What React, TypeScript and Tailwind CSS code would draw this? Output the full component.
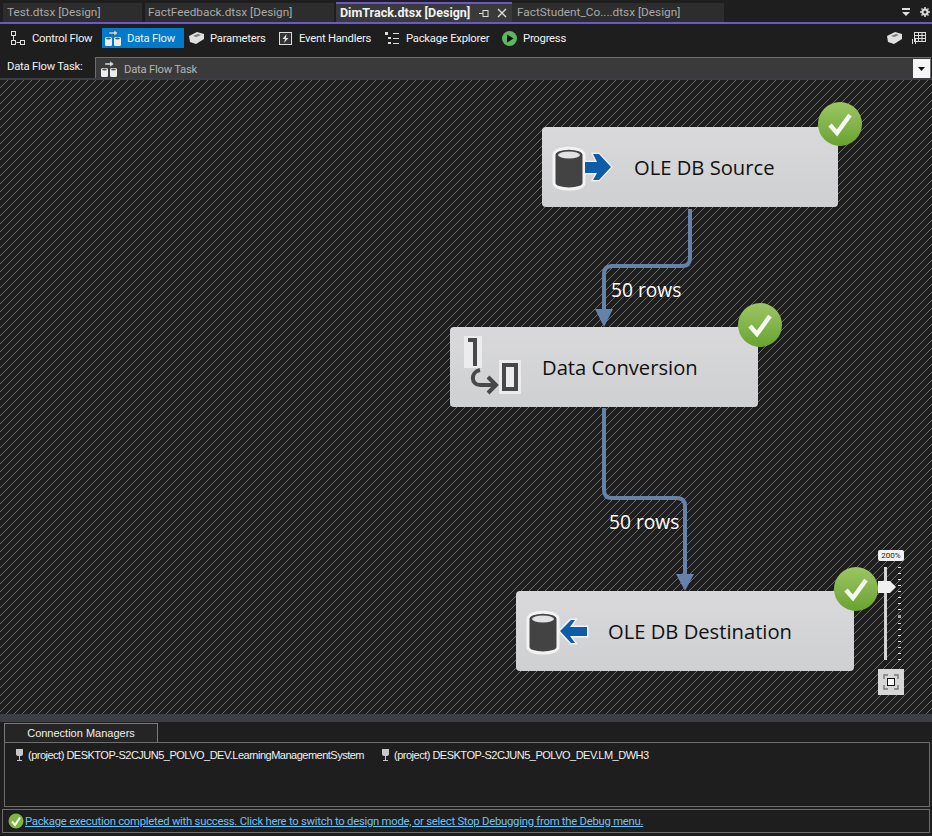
import React from 'react';

const ui = "font-['Roboto','Noto_Sans',sans-serif]";
const small = 'text-[11.3px] tracking-[-0.25px]';

const Check = ({ className }: { className: string }) => (
  <div className={`absolute flex h-[44px] w-[44px] items-center justify-center rounded-full bg-gradient-to-b from-[#9cc664] to-[#69a32f] ${className}`}>
    <svg width="30" height="30" viewBox="0 0 30 30" fill="none">
      <path d="M5 16 L12 24 L25 6" stroke="#fff" strokeWidth="4.5" strokeOpacity="0.92" />
    </svg>
  </div>
);

const Cylinder = () => (
  <g>
    <path d="M4 13 C4 4 34 4 34 13 L34 41 C34 49 4 49 4 41 Z" fill="#434343" stroke="#f3f3f4" strokeWidth="3" />
    <ellipse cx="19" cy="13" rx="11" ry="3.5" fill="#e2e2e4" />
  </g>
);

const SourceIcon = () => (
  <svg width="64" height="52" viewBox="0 0 64 52" className="blur-[0.3px]">
    <Cylinder />
    <path d="M35 20 H47 L43 12 H49 L61 25 L49 38 H43 L47 31 H35 Z" fill="#0e5ba8" stroke="#f3f3f4" strokeWidth="2.5" paintOrder="stroke" />
  </svg>
);

const DestIcon = () => (
  <svg width="68" height="52" viewBox="0 0 68 52" className="blur-[0.3px]">
    <Cylinder />
    <path d="M36 25 L47 14 H51 L46 21 H63 V30 H46 L51 37 H47 Z" fill="#0e5ba8" stroke="#f3f3f4" strokeWidth="3" paintOrder="stroke" />
  </svg>
);

const ConvertIcon = () => (
  <svg width="58" height="62" viewBox="0 0 58 62" fill="none" className="blur-[0.3px]">
    <rect x="1" y="1" width="18" height="32" fill="#ececee" />
    <path d="M5 5 H12 V31" stroke="#484848" strokeWidth="4" />
    <rect x="36" y="25" width="22" height="34" fill="#ececee" />
    <rect x="41" y="30" width="12" height="24" stroke="#484848" strokeWidth="4" />
    <path d="M17 35 C7 37 8 50 17 50 H32 M25 42 L33 50 L25 58" stroke="#484848" strokeWidth="4" />
  </svg>
);

const Node = ({ className, iconClass, icon, label }: { className: string; iconClass: string; icon: React.ReactNode; label: string }) => (
  <div className={`absolute h-[80px] rounded-[4px] bg-gradient-to-b from-[#d9d9dc] to-[#cfd0d2] ${className}`}>
    <div className={`absolute ${iconClass}`}>{icon}</div>
    <span className="absolute left-[92px] top-[24px] whitespace-nowrap font-['Open_Sans',sans-serif] text-[20.2px] leading-[32px] text-[#111]">{label}</span>
  </div>
);

const ToolItem = ({ icon, label, className }: { icon: React.ReactNode; label: string; className: string }) => (
  <div className={`flex h-[20px] items-center ${className}`}>
    {icon}
    <span className={`whitespace-nowrap pt-[2px] text-[#f1f1f1] ${small}`}>{label}</span>
  </div>
);

const Drums = () => (
  <svg width="16" height="16" viewBox="0 0 16 16" fill="#ececec" className="mr-[6px] shrink-0">
    <rect x="0" y="7" width="7" height="9" rx="1.5" />
    <rect x="9" y="7" width="7" height="9" rx="1.5" />
    <ellipse cx="3.5" cy="8.5" rx="2.4" ry="0.9" fill="#555" />
    <ellipse cx="12.5" cy="8.5" rx="2.4" ry="0.9" fill="#555" />
    <path d="M4 2 H9 V0 L13 3 L9 6 V4 H4 Z" fill="#d8d8d8" stroke="#444" strokeWidth="0.5" />
  </svg>
);

const ParamBox = ({ className }: { className: string }) => (
  <svg width="15" height="12" viewBox="0 0 15 12" fill="#e0e0e0" className={className}>
    <path d="M0 4 L8 0 L15 2 L15 7 L7 12 L1 10 Z" />
    <path d="M4 4 L9 2 L12 3 L7 5 Z" fill="#777" />
  </svg>
);

const Tab = ({ label, className }: { label: string; className: string }) => (
  <div className={`flex h-[19px] items-center whitespace-nowrap bg-[#2d2d2d] text-[11.8px] text-[#a9a9a9] ${className}`}>{label}</div>
);

// diagonal stripes of the design surface, one 8x8 tile drawn pixel by pixel
const Hatch = () => (
  <svg className="absolute left-0 top-0" width="932" height="636" shapeRendering="crispEdges">
    <defs>
      <pattern id="hatch" width="8" height="8" patternUnits="userSpaceOnUse">
        <rect width="8" height="8" fill="#1e1e1e" />
        {[0, 1, 2, 3, 4, 5, 6, 7].map((i) => (
          <rect key={i} x={7 - i} y={i} width="1" height="1" fill="#6e6e6e" />
        ))}
      </pattern>
    </defs>
    <rect width="932" height="636" fill="url(#hatch)" />
  </svg>
);

const Connectors = () => (
  <svg className="absolute left-0 top-0" width="932" height="636" viewBox="0 80 932 636" fill="none">
    <path d="M690 209 V258 Q690 266 682 266 H612 Q604 266 604 274 V312" stroke="#6582ab" strokeWidth="4" />
    <path d="M595 309 H613 L604 327 Z" fill="#6582ab" />
    <path d="M604 408 V490 Q604 498 612 498 H677 Q685 498 685 506 V576" stroke="#6582ab" strokeWidth="4" />
    <path d="M676 574 H694 L685 591 Z" fill="#6582ab" />
  </svg>
);

const Ticks = () => (
  <div className="absolute left-[20px] top-[17px] flex h-[93px] w-[3px] flex-col justify-between">
    {Array.from({ length: 16 }).map((_, i) => (
      <div key={i} className={i === 8 ? 'h-[3px] w-[3px] bg-[#aaa]' : 'h-[1px] w-[3px] bg-[#e4e4e4]'} />
    ))}
  </div>
);

const Plug = () => (
  <svg width="9" height="14" viewBox="0 0 9 14" fill="none" className="shrink-0">
    <path d="M1 1 H8 V6 Q8 8 5 8 V12 H7 V13 H2 V12 H4 V8 Q1 8 1 6 Z" fill="#c8c8c8" />
  </svg>
);

export default function App() {
  return (
    <div className={`flex h-[836px] w-[932px] flex-col overflow-hidden bg-[#1e1e1e] ${ui}`}>
      {/* document tabs */}
      <div className="flex h-[24px] shrink-0 items-start border-b-2 border-[#6b58cf] pt-[3px]">
        <Tab label="Test.dtsx [Design]" className="ml-[3px] w-[139px] pl-[4px]" />
        <Tab label="FactFeedback.dtsx [Design]" className="ml-[3px] w-[189px] pl-[3px]" />
        <div className="-mt-[1px] ml-[2px] flex h-[20px] w-[176px] items-center border-t-2 border-[#6b58cf] bg-[#3a3a3a] pl-[4px] text-[12.5px] font-bold text-[#f1f1f1]">
          <span className="whitespace-nowrap">DimTrack.dtsx [Design]</span>
          <svg className="ml-[9px] shrink-0" width="10" height="10" viewBox="0 0 10 10" fill="none" stroke="#ddd">
            <path d="M0 5.5 H4 M4 2.5 H9 M4 8.5 H9 M4 2 V9 M9 2 V9" />
          </svg>
          <svg className="ml-[8px] shrink-0" width="10" height="10" viewBox="0 0 10 10" fill="none" stroke="#ddd" strokeWidth="1.4">
            <path d="M1 1 L9 9 M9 1 L1 9" />
          </svg>
        </div>
        <Tab label="FactStudent_Co....dtsx [Design]" className="w-[212px] pl-[5px]" />
        <div className="ml-auto mr-[1px] flex h-[18px] items-center gap-[9px] pr-[1px]">
          <svg width="10" height="9" viewBox="0 0 10 9" fill="#e0e0e0"><rect x="1" y="0" width="8" height="2" /><path d="M1 4 H9 L5 8 Z" /></svg>
          <svg width="10" height="10" viewBox="0 0 10 10" fill="none" stroke="#ddd" strokeWidth="2">
            <circle cx="5" cy="5" r="2.5" />
            <path d="M5 0 V2 M5 8 V10 M0 5 H2 M8 5 H10 M1.5 1.5 L2.5 2.5 M7.5 7.5 L8.5 8.5 M8.5 1.5 L7.5 2.5 M2.5 7.5 L1.5 8.5" strokeWidth="1.5" />
          </svg>
        </div>
      </div>

      {/* designer toolbar */}
      <div className="flex h-[28px] shrink-0 items-center pl-[8px]">
        <ToolItem
          className="w-[94px] pl-[3px]"
          label="Control Flow"
          icon={
            <svg width="15" height="15" viewBox="0 0 15 15" fill="none" stroke="#ddd" className="mr-[6px]">
              <rect x="0.5" y="0.5" width="4" height="4" />
              <rect x="0.5" y="9.5" width="4" height="4" />
              <rect x="9.5" y="9.5" width="4" height="4" />
              <path d="M2.5 5 V9 M5.5 11.5 H9" />
            </svg>
          }
        />
        <ToolItem className="w-[82px] bg-[#007acc] pl-[3px]" label="Data Flow" icon={<Drums />} />
        <ToolItem className="w-[92px] pl-[5px]" label="Parameters" icon={<ParamBox className="mr-[6px] shrink-0" />} />
        <ToolItem
          className="w-[106px] pl-[3px]"
          label="Event Handlers"
          icon={
            <svg width="13" height="13" viewBox="0 0 13 13" className="mr-[7px] shrink-0">
              <rect x="0.5" y="0.5" width="12" height="12" fill="#333" stroke="#ddd" />
              <path d="M7.5 2 L3.5 7 H6 L5 11 L9.5 6 H7 Z" fill="#ddd" />
            </svg>
          }
        />
        <ToolItem
          className="w-[117px] pl-[3px]"
          label="Package Explorer"
          icon={
            <svg width="14" height="14" viewBox="0 0 14 14" fill="#ddd" className="mr-[7px] shrink-0">
              <rect x="0" y="1" width="3" height="3" />
              <rect x="3" y="6" width="3" height="2" />
              <rect x="3" y="11" width="3" height="2" />
              <rect x="8" y="2" width="6" height="1" />
              <rect x="8" y="7" width="6" height="1" />
              <rect x="8" y="12" width="6" height="1" />
            </svg>
          }
        />
        <ToolItem
          className="pl-[3px]"
          label="Progress"
          icon={
            <svg width="15" height="15" viewBox="0 0 15 15" className="mr-[6px] shrink-0">
              <circle cx="7.5" cy="7.5" r="7.5" fill="#5cb85c" />
              <path d="M5 3.5 L11.5 7.5 L5 11.5 Z" fill="#111" />
            </svg>
          }
        />
        <div className="ml-auto flex items-center gap-[10px] pr-[6px]">
          <ParamBox className="shrink-0" />
          <svg width="14" height="14" viewBox="0 0 14 14" fill="none" stroke="#ddd">
            <rect x="2.5" y="1.5" width="11" height="9" />
            <path d="M2.5 4.5 H13.5 M6.5 1.5 V10.5 M10 1.5 V10.5 M2.5 7.5 H13.5 M0.5 8 V13 M3.5 8 V13" />
          </svg>
        </div>
      </div>

      {/* task selector */}
      <div className="flex h-[26px] shrink-0 items-start pl-[7px] pr-[1px] pt-[5px]">
        <span className={`w-[88px] pt-[1px] leading-[18px] text-[#f1f1f1] ${small}`}>Data Flow Task:</span>
        <div className="flex h-[21px] flex-1 items-center border border-b-0 border-[#6d6d6d] bg-[#3a3a3a] pl-[5px] pt-[1px]">
          <Drums />
          <span className={`ml-[1px] pt-[3px] text-[#b4b4b4] ${small}`}>Data Flow Task</span>
          <div className="ml-auto flex h-[20px] w-[17px] items-center justify-center bg-[#f5f5f5]">
            <svg width="7" height="4" viewBox="0 0 7 4" fill="#111"><path d="M0 0 H7 L3.5 4 Z" /></svg>
          </div>
        </div>
      </div>

      {/* design surface */}
      <div className="relative h-[636px] shrink-0 overflow-hidden border-t-[2px] border-[#3b3e42] bg-[#1e1e1e]">
        <Hatch />
        <Connectors />
        <Node className="left-[542px] top-[47px] w-[296px]" iconClass="left-[8px] top-[15px]" icon={<SourceIcon />} label="OLE DB Source" />
        <Node className="left-[450px] top-[247px] w-[308px]" iconClass="left-[13px] top-[8px]" icon={<ConvertIcon />} label="Data Conversion" />
        <Node className="left-[516px] top-[511px] w-[338px]" iconClass="left-[8px] top-[15px]" icon={<DestIcon />} label="OLE DB Destination" />
        <Check className="left-[818px] top-[22px]" />
        <Check className="left-[738px] top-[223px]" />
        <Check className="left-[834px] top-[487px]" />
        <span className="absolute left-[611px] top-[195px] font-['Open_Sans',sans-serif] text-[19.2px] leading-[30px] text-white">50 rows</span>
        <span className="absolute left-[609px] top-[427px] font-['Open_Sans',sans-serif] text-[19.2px] leading-[30px] text-white">50 rows</span>

        {/* zoom slider */}
        <div className="absolute left-[878px] top-[470px] h-[146px] w-[26px]">
          <div className="h-[11px] rounded-[2px] bg-[#f2f2f2] text-center text-[8px] leading-[11px] text-[#222]">200%</div>
          <div className="absolute left-[6px] top-[17px] h-[93px] w-[3px] bg-[#d4d4d4]" />
          <Ticks />
          <svg className="absolute left-0 top-[31px]" width="18" height="12" viewBox="0 0 18 12" fill="#f0f0f0">
            <path d="M0 0 H12 L18 6 L12 12 H0 Z" />
          </svg>
          <div className="absolute left-0 top-[119px] flex h-[26px] w-[26px] items-center justify-center bg-[#d6d6d6]">
            <svg width="16" height="16" viewBox="0 0 16 16" fill="none">
              <path d="M1 5 V1 H5 M11 1 H15 V5 M15 11 V15 H11 M5 15 H1 V11" stroke="#777" strokeWidth="1.4" />
              <rect x="4.5" y="4.5" width="7" height="7" fill="#fff" stroke="#111" />
            </svg>
          </div>
        </div>
      </div>

      {/* connection managers */}
      <div className="h-[8px] shrink-0 bg-[#3b3e42]" />
      <div className="flex shrink-0 flex-col pl-[4px] pr-[2px] pt-[1px]">
        <div className="flex h-[19px] w-[154px] items-center justify-center border border-b-0 border-[#7a7a7a] bg-[#252526] font-['Liberation_Sans',sans-serif] text-[11px] text-[#f0f0f0]">
          Connection Managers
        </div>
        <div className="flex h-[65px] items-start gap-[17px] border border-[#6d6d6d] pl-[10px] pt-[4px] font-['Liberation_Sans',sans-serif] text-[11px] tracking-[-0.5px] text-[#f0f0f0]">
          <div className="flex items-center gap-[4px]"><Plug /><span>(project) DESKTOP-S2CJUN5_POLVO_DEV.LearningManagementSystem</span></div>
          <div className="flex items-center gap-[4px]"><Plug /><span>(project) DESKTOP-S2CJUN5_POLVO_DEV.LM_DWH3</span></div>
        </div>
      </div>
      <div className="mx-[2px] mt-[2px] flex h-[24px] items-center gap-[1px] border border-[#6d6d6d] pl-[5px]">
        <svg width="16" height="16" viewBox="0 0 16 16" fill="none" className="shrink-0">
          <circle cx="8" cy="8" r="7.5" fill="#7fb342" />
          <path d="M4 8.5 L7 12 L12 4.5" stroke="#fff" strokeWidth="2" />
        </svg>
        <span className={`whitespace-nowrap pt-[2px] text-[#6cc2f5] underline ${small}`}>Package execution completed with success. Click here to switch to design mode, or select Stop Debugging from the Debug menu.</span>
      </div>
    </div>
  );
}
